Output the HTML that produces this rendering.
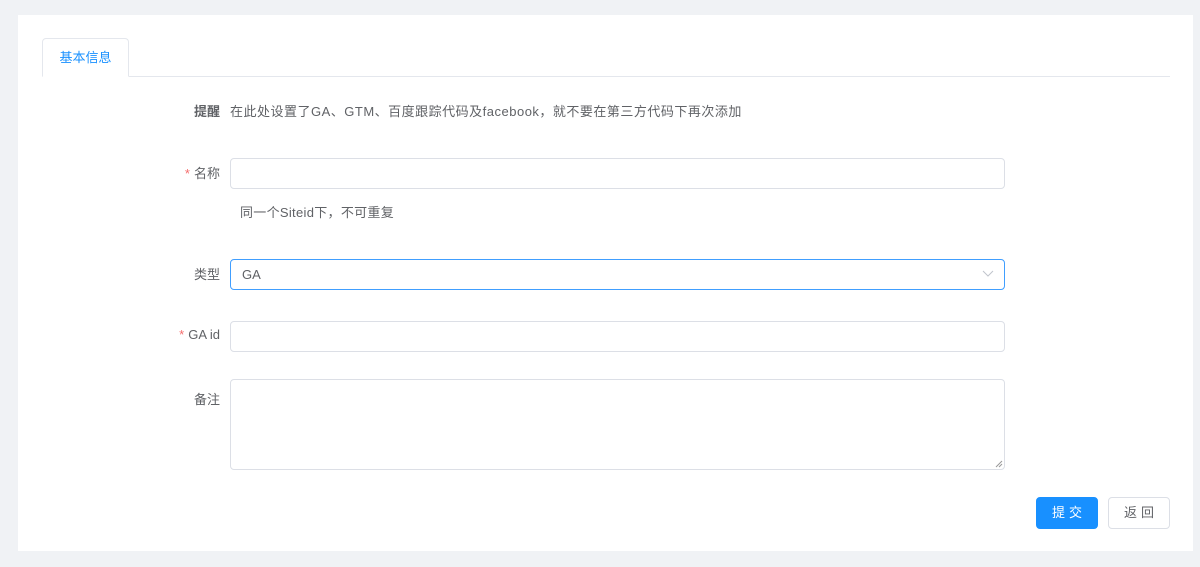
<!DOCTYPE html>
<html><head><meta charset="utf-8"><style>
*{box-sizing:border-box;margin:0;padding:0}
body{width:1200px;height:567px;background:#f0f2f5;font-family:"Liberation Sans","Noto Sans CJK SC",sans-serif;font-size:13px;color:#606266;position:relative;overflow:hidden}
.card{position:absolute;left:18px;top:15px;width:1175px;height:536px;background:#fff}
.abs{position:absolute}
.tab{left:42px;top:38px;width:87px;height:39px;border:1px solid #e4e7ed;border-bottom:1px solid #fff;border-radius:4px 4px 0 0;color:#1890ff;font-size:13px;text-align:center;line-height:37px;background:#fff;z-index:2}
.line{left:42px;top:76px;width:1128px;height:1px;background:#e4e7ed}
.lbl{width:220px;text-align:right;left:0;font-size:13px;color:#606266}
.inp{left:230px;width:775px;height:31px;border:1px solid #dcdfe6;border-radius:4px;background:#fff;padding-left:11px;line-height:29px;color:#606266}
.star{color:#f56c6c;margin-right:4px}
.btn{height:32px;border-radius:4px;text-align:center;line-height:30px;font-size:13px;letter-spacing:4px;padding-left:4px}
</style></head><body>
<div class="card"></div>
<div class="abs tab">基本信息</div>
<div class="abs line"></div>
<div class="abs lbl" style="top:101px;color:#606266;font-weight:bold">提醒</div>
<div class="abs" style="left:230px;top:101px;color:#606266;letter-spacing:0.5px">在此处设置了GA、GTM、百度跟踪代码及facebook，就不要在第三方代码下再次添加</div>
<div class="abs lbl" style="top:163px"><span class="star">*</span>名称</div>
<div class="abs inp" style="top:158px"></div>
<div class="abs" style="left:240px;top:202px;letter-spacing:0.3px">同一个Siteid下，不可重复</div>
<div class="abs lbl" style="top:264px">类型</div>
<div class="abs inp" style="top:259px;border-color:#409eff">GA<svg class="abs" style="right:10px;top:10px" width="12" height="8" viewBox="0 0 12 8"><path d="M1 1L6 6L11 1" fill="none" stroke="#c0c4cc" stroke-width="1"/></svg></div>
<div class="abs lbl" style="top:327px"><span class="star">*</span>GA id</div>
<div class="abs inp" style="top:321px"></div>
<div class="abs lbl" style="top:389px">备注</div>
<div class="abs inp" style="top:379px;height:91px"><svg class="abs" style="right:1px;bottom:1px" width="8" height="8"><path d="M7 1L1 7M7 4L4 7" stroke="#999" stroke-width="1"/></svg></div>
<div class="abs btn" style="left:1036px;top:497px;width:62px;background:#1890ff;color:#fff;border:1px solid #1890ff">提交</div>
<div class="abs btn" style="left:1108px;top:497px;width:62px;background:#fff;color:#606266;border:1px solid #dcdfe6">返回</div>
</body></html>
